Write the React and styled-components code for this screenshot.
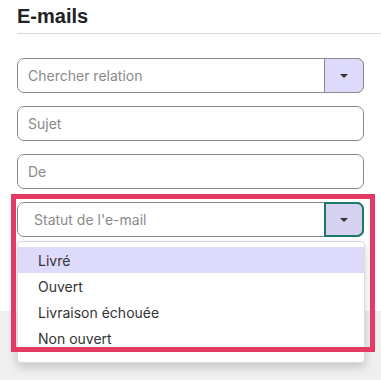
import React from "react";
import styled, { createGlobalStyle } from "styled-components";

const GlobalStyle = createGlobalStyle`
  html, body {
    margin: 0;
    padding: 0;
    background: #efefef;
    font-family: Inter, "Noto Sans", sans-serif;
  }
`;

const Page = styled.div`
  display: flex;
  flex-direction: column;
  height: 380px;
  background: #efefef;
`;

const Panel = styled.section`
  position: relative;
  z-index: 1;
  background: #fff;
  height: 311px;
  flex: none;
  padding: 4px 0 0 17px;
  box-sizing: border-box;
`;

const Title = styled.h2`
  margin: 0;
  font-family: "Liberation Sans", Arial, sans-serif;
  font-size: 20px;
  line-height: 24px;
  font-weight: 700;
  color: #222;
`;

const Divider = styled.hr`
  margin: 5px 0 0;
  border: 0;
  border-top: 1px solid #d9d9d9;
`;

const Form = styled.div`
  display: flex;
  flex-direction: column;
  gap: 13px;
  padding: 24px 17px 0 0;
`;

const Field = styled.div`
  position: relative;
  display: flex;
  height: 35px;
  box-sizing: border-box;
  border: 1px solid #8a8a8a;
  border-radius: 7px;
  background: #fff;
`;

const Placeholder = styled.span`
  flex: 1;
  display: flex;
  align-items: center;
  padding-left: ${(p) => p.$indent || 10}px;
  font-size: 14px;
  color: #8a8a8a;
`;

const Toggle = styled.div`
  width: 40px;
  margin: -1px -1px -1px 0;
  display: flex;
  align-items: center;
  justify-content: center;
  box-sizing: border-box;
  border-radius: 0 7px 7px 0;
  background: ${(p) => (p.$active ? "#d6d0f1" : "#dedafb")};
  border: ${(p) => (p.$active ? "2px solid #1d7a66" : "1px solid #8a8a8a")};
`;

const Caret = styled.span`
  width: 0;
  height: 0;
  border-left: 4px solid transparent;
  border-right: 4px solid transparent;
  border-top: 4px solid #333;
`;

const Highlight = styled.div`
  position: absolute;
  top: -9px;
  left: -7px;
  right: -12px;
  height: 158px;
  box-sizing: border-box;
  border: 5px solid #e33b63;
  pointer-events: none;
  z-index: 3;
`;

const Menu = styled.ul`
  position: absolute;
  top: 38px;
  left: -1px;
  right: -2px;
  margin: 0;
  padding: 5px 0 11px;
  list-style: none;
  background: #fff;
  border: 1px solid #dcdcdc;
  border-radius: 4px;
  box-shadow: 0 4px 10px rgba(0, 0, 0, 0.18);
  z-index: 2;
`;

const Item = styled.li`
  height: 26px;
  display: flex;
  align-items: center;
  padding-left: 20px;
  font-size: 14px;
  color: #333;
  background: ${(p) => (p.$selected ? "#dedafb" : "transparent")};
`;

const options = ["Livré", "Ouvert", "Livraison échouée", "Non ouvert"];

export default function App() {
  return (
    <>
      <GlobalStyle />
      <Page>
        <Panel>
          <Title>E-mails</Title>
          <Divider />
          <Form>
            <Field>
              <Placeholder>Chercher relation</Placeholder>
              <Toggle>
                <Caret />
              </Toggle>
            </Field>
            <Field>
              <Placeholder>Sujet</Placeholder>
            </Field>
            <Field>
              <Placeholder>De</Placeholder>
            </Field>
            <Field>
              <Placeholder $indent={16}>Statut de l'e-mail</Placeholder>
              <Toggle $active>
                <Caret />
              </Toggle>
              <Menu>
                {options.map((o, i) => (
                  <Item key={o} $selected={i === 0}>
                    {o}
                  </Item>
                ))}
              </Menu>
              <Highlight />
            </Field>
          </Form>
        </Panel>
      </Page>
    </>
  );
}
